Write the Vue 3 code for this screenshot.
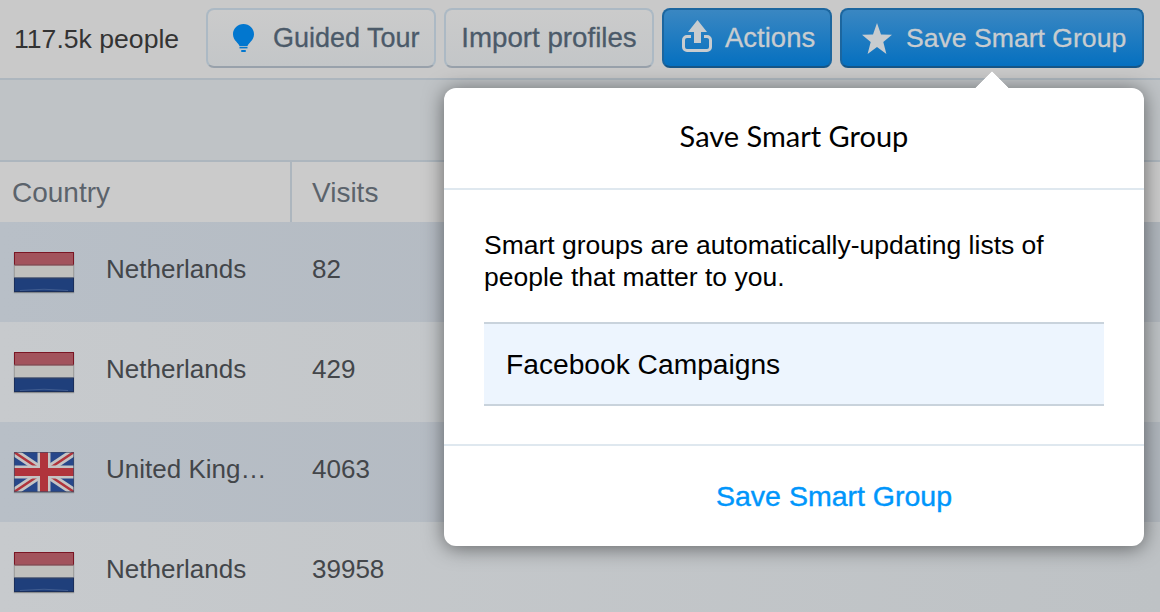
<template>
  <div class="page">
    <header class="topbar">
      <span class="count">117.5k people</span>
      <button class="btn plain tour">
        <svg class="ico bulb" viewBox="0 0 21 28" aria-hidden="true">
          <path d="M10.500 0C4.700 0 0 4.500 0 10.200c0 3.400 1.600 5.400 3.200 7.400 1.300 1.600 2.600 3 3.300 4.400h8c.7-1.400 2-2.800 3.300-4.400 1.600-2 3.200-4 3.200-7.400C21 4.500 16.300 0 10.500 0z" />
          <rect x="6.500" y="22.800" width="8" height="1.600" />
          <rect x="8" y="26" width="5" height="2" rx="1" />
        </svg>
        <span>Guided Tour</span>
      </button>
      <button class="btn plain import">Import profiles</button>
      <button class="btn blue actions">
        <svg class="ico share" viewBox="0 0 30 32" aria-hidden="true">
          <path d="M15.500 0L25 12h-6v11h-7V12H6z" />
          <path d="M9 16.500H5A3.500 3.500 0 0 0 1.500 20v7A3.500 3.500 0 0 0 5 30.500h20a3.500 3.500 0 0 0 3.500-3.500v-7a3.500 3.500 0 0 0-3.500-3.500h-3" fill="none" stroke="currentColor" stroke-width="3" />
        </svg>
        <span>Actions</span>
      </button>
      <button class="btn blue save">
        <svg class="ico star" viewBox="0 0 30 31" aria-hidden="true">
          <path d="M15 0l4 11.500 11 .3-8.700 7.100 3.100 12L15 24l-9.400 6.900 3.100-12L0 11.800l11-.3z" />
        </svg>
        <span>Save Smart Group</span>
      </button>
    </header>

    <div class="band"></div>

    <div class="thead">
      <div class="th col-country">Country</div>
      <div class="th col-visits">Visits</div>
    </div>

    <div
      v-for="(row, i) in rows"
      :key="i"
      class="row"
      :class="{ dark: i % 2 === 0 }"
    >
      <div class="col-country cell">
        <svg v-if="row.flag === 'nl'" class="flag" viewBox="0 0 60 40" aria-hidden="true">
          <rect width="60" height="13" fill="#a2535c" />
          <rect y="13" width="60" height="13" fill="#c0c0bd" />
          <rect y="26" width="60" height="14" fill="#1f3f7b" />
          <path d="M6 38.500q24-2.500 48 0" stroke="#7f93b5" stroke-opacity=".35" fill="none" />
          <rect x=".5" y=".5" width="59" height="12.500" fill="none" stroke="#7a1624" />
          <rect x=".5" y="13" width="59" height="13" fill="none" stroke="#8a8a88" stroke-opacity=".6" />
          <rect x=".5" y="26" width="59" height="13.500" fill="none" stroke="#1a2f5c" />
        </svg>
        <svg v-else class="flag" viewBox="0 0 60 40" aria-hidden="true">
          <rect width="60" height="40" fill="#27478a" />
          <path d="M0 0l60 40M60 0L0 40" stroke="#c4c4c4" stroke-width="8" />
          <path d="M0 0l30 20M60 40L30 20M60 0L30 20M0 40l30-20" stroke="#b0343c" stroke-width="2.500" />
          <path d="M30 0v40M0 20h60" stroke="#c4c4c4" stroke-width="13" />
          <path d="M30 0v40M0 20h60" stroke="#b0343c" stroke-width="8" />
          <rect x=".5" y=".5" width="59" height="39" fill="none" stroke="#3a4a66" stroke-opacity=".6" />
        </svg>
        <span class="name">{{ row.country }}</span>
      </div>
      <div class="col-visits cell visits"><span>{{ row.visits }}</span></div>
    </div>

    <section class="popover">
      <span class="arrow"></span>
      <h2 class="pop-title">Save Smart Group</h2>
      <div class="pop-body">
        <p class="pop-text">Smart groups are automatically-updating lists of people that matter to you.</p>
        <div class="field">Facebook Campaigns</div>
      </div>
      <div class="pop-foot">
        <a class="pop-save">Save Smart Group</a>
      </div>
    </section>
  </div>
</template>

<script setup>
const rows = [
  { flag: 'nl', country: 'Netherlands', visits: '82' },
  { flag: 'nl', country: 'Netherlands', visits: '429' },
  { flag: 'gb', country: 'United King…', visits: '4063' },
  { flag: 'nl', country: 'Netherlands', visits: '39958' }
];
</script>

<style scoped>
.page {
  position: relative;
  width: 1160px;
  height: 612px;
  overflow: hidden;
  background: #c6c9cc;
  font-family: "Liberation Sans", Arial, sans-serif;
  font-size: 26px;
  color: #3c3c3c;
}

.topbar {
  display: flex;
  align-items: flex-start;
  gap: 8px;
  height: 80px;
  padding: 8px 16px 0 14px;
  box-sizing: border-box;
  background: #c9c9c9;
  border-bottom: 2px solid #adb6be;
}

.count {
  width: 184px;
  margin-top: 16px;
  font-size: 26.600px;
  line-height: 30px;
  color: #333;
}

.btn {
  display: flex;
  align-items: center;
  height: 60px;
  padding: 0;
  box-sizing: border-box;
  border-radius: 8px;
  font: inherit;
  white-space: nowrap;
  -webkit-text-stroke: 0.3px currentColor;
}

.plain {
  border: 2px solid #acb9c4;
  border-bottom-color: #98a1ab;
  background: linear-gradient(#cbcbcb, #c3c6c8);
  color: #4b5a69;
}

.blue {
  border: 2px solid #1c669f;
  border-bottom-color: #165687;
  background: linear-gradient(#3a87c2, #0570c0);
  color: #c8cccf;
}

.tour { width: 230px; padding-left: 25px; gap: 19px; font-size: 27px; }
.import { width: 210px; justify-content: center; font-size: 27.700px; }
.actions { width: 170px; padding-left: 18px; gap: 13px; font-size: 27.500px; }
.save { width: 304px; padding-left: 20px; gap: 14px; font-size: 26.600px; }

.ico { display: block; flex: none; fill: currentColor; stroke: none; }
.bulb { width: 21px; height: 28px; color: #0277cf; }
.share { width: 30px; height: 32px; margin-bottom: 4px; }
.star { width: 30px; height: 31px; }

.band {
  height: 82px;
  box-sizing: border-box;
  background: #bfc3c6;
  border-bottom: 2px solid #adb6be;
}

.thead {
  display: flex;
  height: 60px;
  background: #cbcbcb;
  color: #5b636b;
  font-size: 28px;
}

.th {
  line-height: 62px;
  padding-left: 12px;
  box-sizing: border-box;
}

.th.col-country {
  width: 292px;
  border-right: 2px solid #adb6be;
}

.th.col-visits { padding-left: 20px; }

.row {
  display: flex;
  height: 100px;
  background: linear-gradient(90deg, #c7cacd, #bec2c5);
  color: #43464a;
}

.row.dark { background: linear-gradient(90deg, #b8bfc7, #b0b6bd); }

.cell {
  display: flex;
  align-items: center;
}

.row .col-country {
  width: 292px;
  flex: none;
  padding-left: 14px;
  box-sizing: border-box;
}

.flag {
  display: block;
  flex: none;
  width: 60px;
  height: 40px;
  margin-right: 32px;
  box-shadow: 0 1px 1px rgba(0, 0, 0, 0.3);
}

.name {
  margin-bottom: 6px;
  line-height: 36px;
  white-space: nowrap;
}

.visits { padding-left: 20px; }
.visits span { margin-bottom: 6px; }

.popover {
  position: absolute;
  left: 444px;
  top: 88px;
  width: 700px;
  height: 458px;
  display: flex;
  flex-direction: column;
  background: #fff;
  border-radius: 12px;
  box-shadow: 0 2px 20px rgba(0, 0, 0, 0.5);
  color: #000;
}

.arrow {
  position: absolute;
  left: 536px;
  top: -12px;
  width: 24px;
  height: 24px;
  background: #fff;
  transform: rotate(45deg);
  clip-path: polygon(0 0, 100% 0, 0 100%);
}

.pop-title {
  margin: 0;
  height: 102px;
  box-sizing: border-box;
  flex: none;
  border-bottom: 2px solid #dfe8ef;
  font-family: Lato, "Open Sans", sans-serif;
  font-size: 29px;
  font-weight: 400;
  line-height: 96px;
  text-align: center;
}

.pop-body {
  height: 256px;
  flex: none;
  padding: 39px 40px 0;
  box-sizing: border-box;
  border-bottom: 2px solid #dfe8ef;
}

.pop-text {
  margin: 0 0 29px;
  width: 620px;
  font-size: 26.500px;
  line-height: 32px;
}

.field {
  height: 84px;
  padding-left: 22px;
  box-sizing: border-box;
  border-top: 2px solid #c9d3dc;
  border-bottom: 2px solid #c9d3dc;
  background: #edf5fe;
  font-size: 28.200px;
  line-height: 80px;
}

.pop-foot {
  flex: 1;
  display: flex;
  align-items: center;
  padding-left: 272px;
}

.pop-save {
  color: #0096fb;
  font-size: 28.500px;
  -webkit-text-stroke: 0.4px #0096fb;
}
</style>

<style>
html, body { margin: 0; overflow: hidden; }
</style>
